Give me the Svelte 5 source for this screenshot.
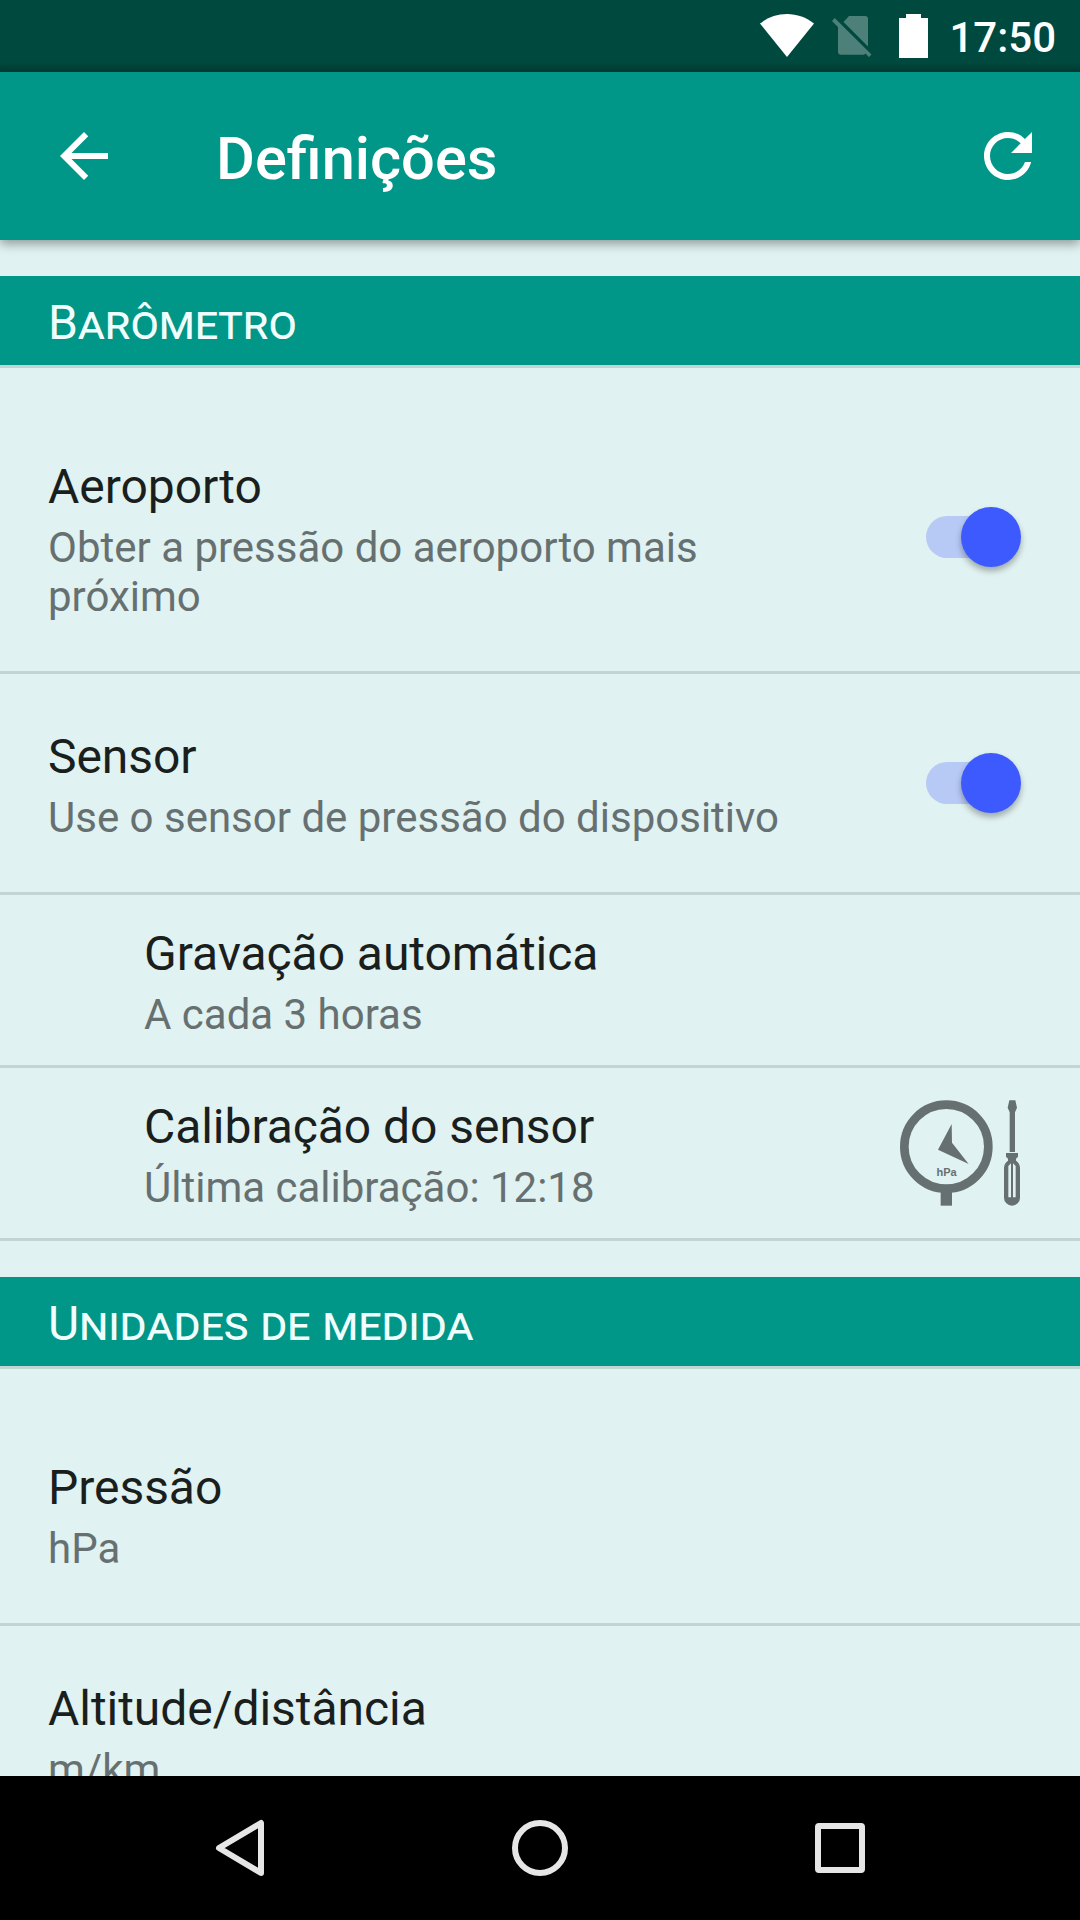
<script>
  // Settings screen: status bar, app bar, grouped preference rows and the
  // system navigation bar.
  const sections = [
    {
      title: 'Barômetro',
      items: [
        {
          title: 'Aeroporto',
          summary: 'Obter a pressão do aeroporto mais próximo',
          widget: 'switch',
        },
        {
          title: 'Sensor',
          summary: 'Use o sensor de pressão do dispositivo',
          widget: 'switch',
        },
        { title: 'Gravação automática', summary: 'A cada 3 horas', nested: true },
        {
          title: 'Calibração do sensor',
          summary: 'Última calibração: 12:18',
          nested: true,
          widget: 'gauge',
        },
      ],
    },
    {
      title: 'Unidades de medida',
      items: [
        { title: 'Pressão', summary: 'hPa' },
        { title: 'Altitude/distância', summary: 'm/km' },
      ],
    },
  ];

  let enabled = $state({ Aeroporto: true, Sensor: true });

  function toggle(name) {
    enabled[name] = !enabled[name];
  }
</script>

<div class="screen">
  <div class="status-bar">
    <svg class="wifi" width="54" height="43" viewBox="0 0 54 43" aria-hidden="true">
      <path d="M27 43 0 9.6C7.5 3.4 17 0 27 0s19.500 3.400 27 9.600z" />
    </svg>
    <svg class="sim" width="40" height="41" viewBox="0 0 40 41" aria-hidden="true">
      <path d="M17 0h16a3 3 0 0 1 3 3v27.500L11.500 6z" />
      <path d="M2.700 2 39.500 38.500 37 41 33.500 37.500a3 3 0 0 1-2 1.200H9a3 3 0 0 1-3-3V11L0 5z" />
    </svg>
    <svg class="battery" width="29" height="44" viewBox="0 0 29 44" aria-hidden="true">
      <path d="M7 0h15v4h7v40H0V4h7z" />
    </svg>
    <span class="clock">17:50</span>
  </div>

  <header class="app-bar">
    <button type="button" class="icon-btn" aria-label="Voltar">
      <svg width="72" height="72" viewBox="0 0 24 24">
        <path d="M20 11H7.830l5.590-5.590L12 4l-8 8 8 8 1.410-1.410L7.830 13H20z" />
      </svg>
    </button>
    <h1>Definições</h1>
    <button type="button" class="icon-btn" aria-label="Atualizar">
      <svg width="72" height="72" viewBox="0 0 24 24">
        <path
          d="M17.650 6.350C16.200 4.900 14.210 4 12 4c-4.420 0-7.990 3.580-7.990 8s3.570 8 7.990 8c3.730 0 6.840-2.550 7.730-6h-2.080c-.82 2.330-3.040 4-5.650 4-3.310 0-6-2.690-6-6s2.690-6 6-6c1.660 0 3.140.69 4.220 1.780L13 11h7V4z"
        />
      </svg>
    </button>
  </header>

  <main>
    {#each sections as section}
      <section>
        <h2>{section.title}</h2>
        {#each section.items as item}
          <div class="row" class:nested={item.nested}>
            <div class="text">
              <div class="title">{item.title}</div>
              <div class="summary">{item.summary}</div>
            </div>
            {#if item.widget === 'switch'}
              <button
                type="button"
                class="switch"
                class:on={enabled[item.title]}
                role="switch"
                aria-checked={enabled[item.title]}
                aria-label={item.title}
                onclick={() => toggle(item.title)}
              >
                <span class="thumb"></span>
              </button>
            {:else if item.widget === 'gauge'}
              <svg class="gauge" width="120" height="106" viewBox="60 60 360 318" aria-hidden="true">
                <circle cx="199" cy="200" r="126" fill="none" stroke="#677070" stroke-width="26" />
                <path d="M182 334h34v43h-34z" />
                <path d="M215 132 216 188 266 252 174 209z" />
                <text x="200" y="288" text-anchor="middle">hPa</text>
                <path d="M388 61h18l5 22-6 14v119h-16V97l-6-14z" />
                <path
                  fill-rule="evenodd"
                  d="M378 219h36v11l-6 6v6q12 8 12 22v89a24 24 0 0 1-48 0v-89q0-14 12-22v-6l-6-6zM385 258v94h8V250zM399 250v102h8v-94z"
                />
              </svg>
            {/if}
          </div>
        {/each}
      </section>
    {/each}
  </main>

  <nav>
    <button type="button" aria-label="Voltar">
      <svg width="72" height="72" viewBox="0 0 72 72"><path d="M57 11v50L15 36z" /></svg>
    </button>
    <button type="button" aria-label="Início">
      <svg width="72" height="72" viewBox="0 0 72 72"><circle cx="36" cy="36" r="25" /></svg>
    </button>
    <button type="button" aria-label="Recentes">
      <svg width="72" height="72" viewBox="0 0 72 72"><rect x="14" y="14" width="44" height="44" rx="1" /></svg>
    </button>
  </nav>
</div>

<style>
  :global(body) {
    margin: 0;
  }

  .screen {
    width: 1080px;
    height: 1920px;
    display: flex;
    flex-direction: column;
    overflow: hidden;
    background: #e0f2f1;
    font-family: Roboto, 'Noto Sans', sans-serif;
  }

  button {
    display: block;
    padding: 0;
    border: none;
    background: none;
    cursor: pointer;
  }

  svg {
    display: block;
  }

  .status-bar {
    flex: none;
    box-sizing: border-box;
    height: 72px;
    padding: 14px 24px 0 0;
    display: flex;
    justify-content: flex-end;
    align-items: flex-start;
    background: linear-gradient(#00493e 62px, #003d34 72px);
    color: #fff;
  }

  .status-bar svg {
    fill: #fff;
  }

  .wifi {
    margin-right: 18px;
  }

  .sim {
    margin: 2px 27px 0 0;
    opacity: 0.3;
  }

  .battery {
    margin-right: 21px;
  }

  .clock {
    font-size: 42px;
    font-weight: 500;
    line-height: 48px;
  }

  .app-bar {
    position: relative;
    z-index: 1;
    flex: none;
    box-sizing: border-box;
    height: 168px;
    padding: 0 36px 0 48px;
    display: flex;
    align-items: center;
    background: #009688;
    box-shadow: 0 4px 10px rgba(0, 0, 0, 0.36);
    color: #fff;
  }

  .icon-btn svg {
    fill: #fff;
  }

  /* No letter-spacing here: it would break the "fi" ligature. */
  h1 {
    flex: 1;
    margin: 0;
    padding: 5px 0 0 96px;
    font-size: 59.6px;
    font-weight: 500;
    line-height: 70px;
  }

  main {
    flex: 1;
    min-height: 0;
    overflow: hidden;
  }

  section {
    padding-top: 36px;
  }

  h2 {
    box-sizing: content-box;
    height: 89px;
    margin: 0 0 36px;
    padding-left: 48px;
    border-bottom: 3px solid #c1d5d3;
    background: #009688;
    background-clip: padding-box;
    color: #f0fffe;
    font-size: 48px;
    font-weight: 400;
    line-height: 94px;
    letter-spacing: -0.1px;
    font-variant-caps: small-caps;
  }

  .row {
    display: flex;
    align-items: center;
    justify-content: space-between;
    padding: 0 60px 0 48px;
    border-bottom: 3px solid #c2d4d3;
  }

  .text {
    width: 780px;
    padding: 54px 0 50px;
  }

  .nested {
    padding-left: 144px;
  }

  .nested .text {
    width: 720px;
    padding: 30px 0 26px;
  }

  .title {
    margin-bottom: 8px;
    color: #1a1f1e;
    font-size: 48px;
    line-height: 57px;
    letter-spacing: -0.05px;
  }

  .summary {
    color: #677070;
    font-size: 42px;
    line-height: 49px;
  }

  .switch {
    width: 92px;
    height: 42px;
    margin: 0 2px 1px 0;
    border-radius: 21px;
    background: #b4b9b9;
  }

  .switch.on {
    background: #b7c9f5;
  }

  .thumb {
    display: block;
    width: 60px;
    height: 60px;
    margin: -9px 0;
    border-radius: 50%;
    background: #fafafa;
    box-shadow: 0 4px 6px rgba(0, 0, 0, 0.3);
  }

  .switch.on .thumb {
    margin-left: 35px;
    background: #3d5afe;
  }

  .gauge {
    fill: #677070;
  }

  .gauge text {
    font-family: 'Liberation Sans', Arial, sans-serif;
    font-size: 33px;
    font-weight: 700;
  }

  nav {
    flex: none;
    height: 144px;
    display: flex;
    justify-content: center;
    align-items: center;
    background: #000;
  }

  nav button {
    width: 300px;
    display: flex;
    justify-content: center;
  }

  nav svg {
    fill: none;
    stroke: #e6e6e6;
    stroke-width: 6;
    stroke-linejoin: round;
  }
</style>
